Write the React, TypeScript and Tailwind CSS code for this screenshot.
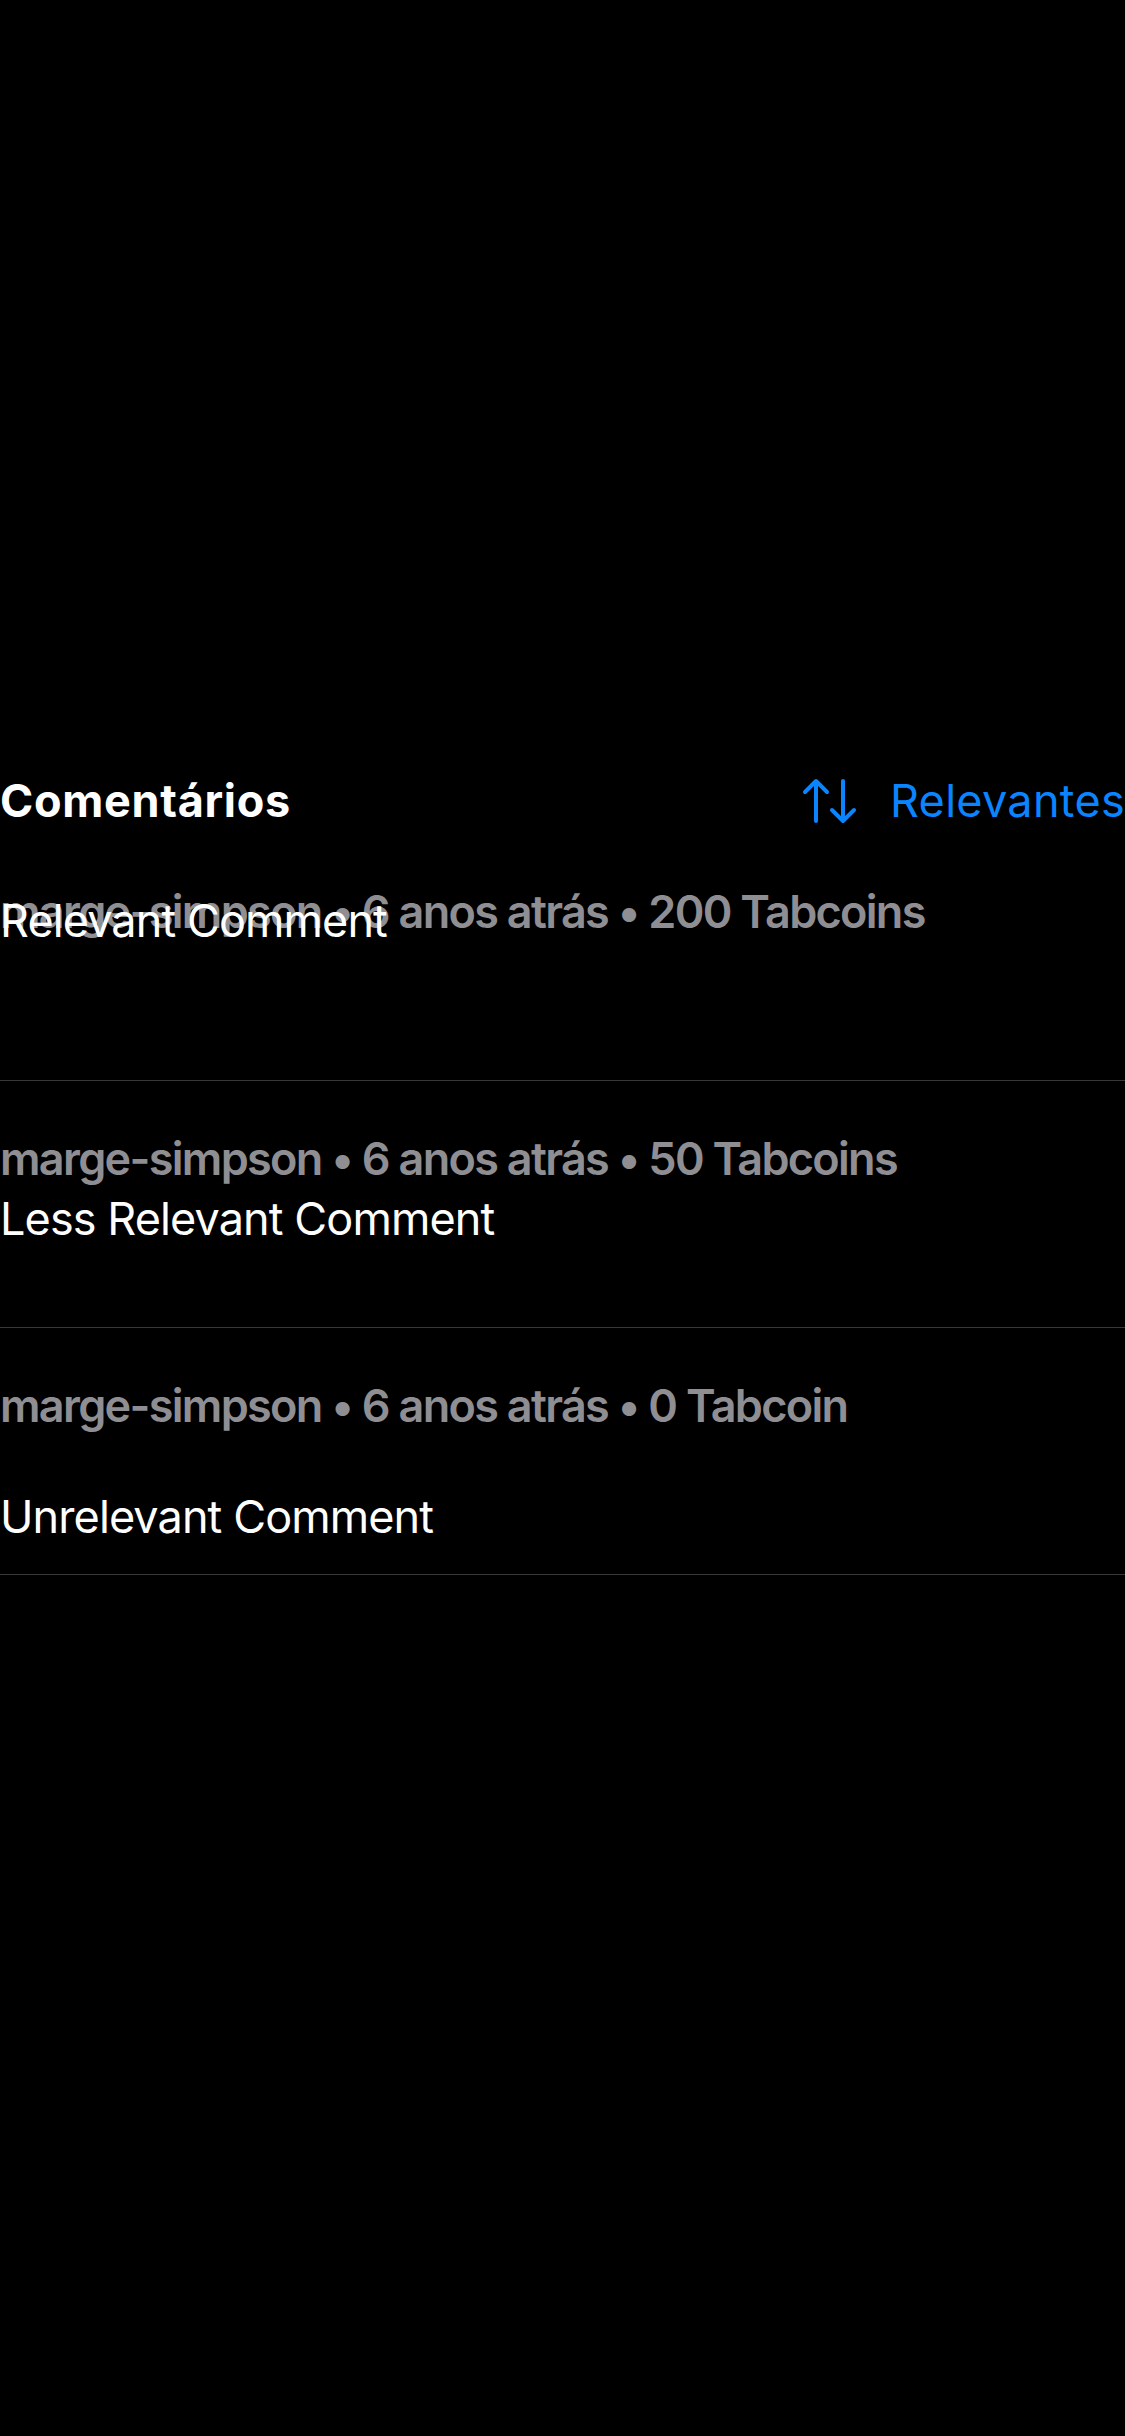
import { useState } from "react";

type Comentario = {
  id: number;
  autor: string;
  tempo: string;
  tabcoins: string;
  texto: string;
  offset: string;
};

const comentarios: Comentario[] = [
  {
    id: 1,
    autor: "marge-simpson",
    tempo: "6 anos atrás",
    tabcoins: "200 Tabcoins",
    texto: "Relevant Comment",
    offset: "-mt-[45px]",
  },
  {
    id: 2,
    autor: "marge-simpson",
    tempo: "6 anos atrás",
    tabcoins: "50 Tabcoins",
    texto: "Less Relevant Comment",
    offset: "mt-[6px]",
  },
  {
    id: 3,
    autor: "marge-simpson",
    tempo: "6 anos atrás",
    tabcoins: "0 Tabcoin",
    texto: "Unrelevant Comment",
    offset: "mt-[57px]",
  },
];

function SortIcon() {
  return (
    <svg
      width="58"
      height="46"
      viewBox="0 0 58 46"
      fill="none"
      stroke="currentColor"
      strokeWidth="4"
      strokeLinecap="round"
      strokeLinejoin="round"
    >
      <path d="M14 3V43M3 14L14 3L25 14" />
      <path d="M41 3V43M30 32L41 43L52 32" />
    </svg>
  );
}

export default function App() {
  const [ordem, setOrdem] = useState("Relevantes");

  return (
    <div className="min-h-[2436px] w-full bg-black pt-[774px] font-[Inter,'Noto_Sans',sans-serif] text-white">
      {/* cabeçalho */}
      <div className="flex items-center justify-between">
        <h2 className="text-[45px] leading-[54px] font-bold tracking-[0.7px]">Comentários</h2>
        <button
          onClick={() => setOrdem(ordem === "Relevantes" ? "Recentes" : "Relevantes")}
          className="flex items-center gap-[30px] text-[#0a84ff]"
        >
          <SortIcon />
          <span className="text-[45px] leading-[54px] tracking-[0.3px]">{ordem}</span>
        </button>
      </div>

      {/* lista */}
      <div className="mt-[6px]">
        {comentarios.map((c) => (
          <div
            key={c.id}
            className="flex h-[247px] flex-col border-b border-[#38383a] pt-[51px]"
          >
            <p className="text-[45px] leading-[54px] font-semibold tracking-[-1.7px] text-[#8e8e93]">
              {c.autor} • {c.tempo} • {c.tabcoins}
            </p>
            <p className={`${c.offset} text-[45px] leading-[54px] tracking-[-0.9px]`}>
              {c.texto}
            </p>
          </div>
        ))}
      </div>
    </div>
  );
}
